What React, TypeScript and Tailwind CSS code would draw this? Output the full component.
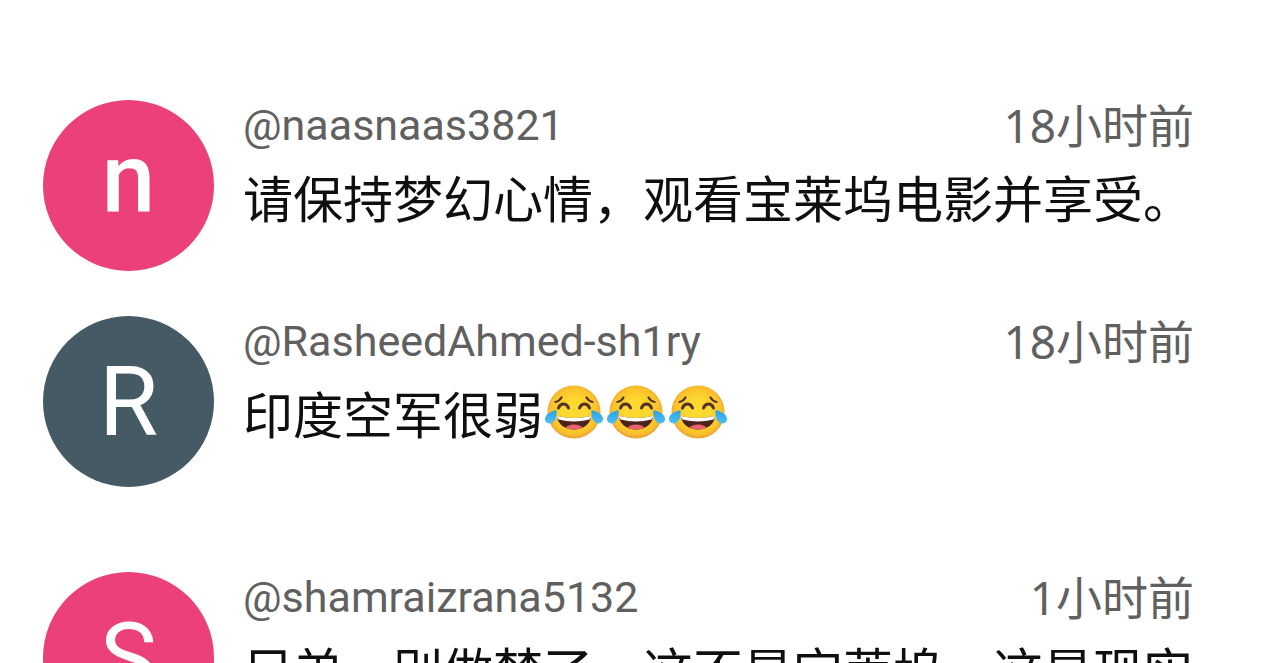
import { useId } from "react";
import { twMerge } from "tailwind-merge";

type Comment = {
  author: string;
  initial: string;
  time: string;
  text: string;
  laughs?: number;
  avatarClass: string;
  className?: string;
};

const comments: Comment[] = [
  {
    author: "@naasnaas3821",
    initial: "n",
    time: "18小时前",
    text: "请保持梦幻心情，观看宝莱坞电影并享受。",
    avatarClass: "bg-[#ec407a]",
    className: "pb-[45px]",
  },
  {
    author: "@RasheedAhmed-sh1ry",
    initial: "R",
    time: "18小时前",
    text: "印度空军很弱",
    laughs: 3,
    avatarClass: "bg-[#455a64]",
    className: "pb-[85px]",
  },
  {
    author: "@shamraizrana5132",
    initial: "S",
    time: "1小时前",
    text: "兄弟，别做梦了，这不是宝莱坞，这是现实",
    avatarClass: "bg-[#ec407a]",
  },
];

const JoyEmoji = () => {
  const id = useId();

  return (
    <svg
      viewBox="0 0 62 56"
      className="h-[56px] w-[62px] shrink-0"
      role="img"
      aria-label="joy"
    >
      <defs>
        <radialGradient id={`${id}face`} cx="0.5" cy="0.48" r="0.52">
          <stop offset="0.4" stopColor="#fdd92f" />
          <stop offset="0.85" stopColor="#fbc12b" />
          <stop offset="1" stopColor="#e9a036" />
        </radialGradient>
        <linearGradient id={`${id}tear`} x1="0" y1="0" x2="0" y2="1">
          <stop offset="0" stopColor="#2a9fe4" />
          <stop offset="1" stopColor="#4fbff5" />
        </linearGradient>
        <clipPath id={`${id}mouth`}>
          <path d="M14 32Q31 36 48 32C47.5 40 40.500 45.500 31 45.500S14.500 40 14 32Z" />
        </clipPath>
      </defs>
      <circle cx="31" cy="28" r="26.500" fill={`url(#${id}face)`} />
      <g fill="none" stroke="#543326" strokeLinecap="round">
        <path d="M12.500 18Q16.500 17 18.500 13.500" strokeWidth="2.200" />
        <path d="M49.500 18Q45.500 17 43.500 13.500" strokeWidth="2.200" />
        <path d="M15.500 24C17.500 18.800 23.500 18.800 25.500 24" strokeWidth="3" />
        <path d="M36.500 24C38.500 18.800 44.500 18.800 46.500 24" strokeWidth="3" />
      </g>
      <g clipPath={`url(#${id}mouth)`}>
        <path d="M12 30h38v17H12z" fill="#4b231c" />
        <path d="M12 30h38l-3.500 5.500Q31 39.500 15.500 35.500Z" fill="#fff" />
        <ellipse cx="31" cy="44.500" rx="8.500" ry="4" fill="#e9636c" />
      </g>
      <path
        d="M13.500 26C14 32 12.500 39 7 39.500C1.500 39.500 0.500 34 4 30.500C6.500 28 10 27 13.500 26Z"
        fill={`url(#${id}tear)`}
      />
      <path
        d="M48.500 26C48 32 49.500 39 55 39.500C60.500 39.500 61.500 34 58 30.500C55.500 28 52 27 48.500 26Z"
        fill={`url(#${id}tear)`}
      />
    </svg>
  );
};

const CommentRow = ({ comment }: { comment: Comment }) => {
  const { author, initial, time, text, laughs = 0 } = comment;
  const isLowerCase = initial === initial.toLowerCase();

  return (
    <li className={twMerge("flex items-start gap-[29px]", comment.className)}>
      <div
        className={twMerge(
          "flex size-[171px] shrink-0 items-center justify-center rounded-full text-[96px] text-white",
          // no ascender, so lift the letter to the optical centre
          isLowerCase && "pb-4 font-medium",
          comment.avatarClass
        )}
      >
        {initial}
      </div>
      <div className="min-w-0 flex-1">
        <div className="flex h-[60px] items-start justify-between pr-[86px] leading-[50px] text-[#606060]">
          <span className="text-[43px]">{author}</span>
          <time className="font-['Noto_Sans','Noto_Sans_CJK_SC',sans-serif] text-[46px]">
            {time}
          </time>
        </div>
        <p className="flex items-center font-['Noto_Sans_CJK_SC',sans-serif] text-[50px] leading-[72px] whitespace-nowrap text-[#0f0f0f]">
          {text}
          {Array.from({ length: laughs }, (_, index) => (
            <JoyEmoji key={index} />
          ))}
        </p>
      </div>
    </li>
  );
};

const App = () => {
  return (
    <main className="h-screen overflow-hidden bg-white pt-[100px] pl-[43px] font-[Roboto,'Noto_Sans_CJK_SC',sans-serif]">
      <ul>
        {comments.map((comment) => (
          <CommentRow key={comment.author} comment={comment} />
        ))}
      </ul>
    </main>
  );
};

export default App;
